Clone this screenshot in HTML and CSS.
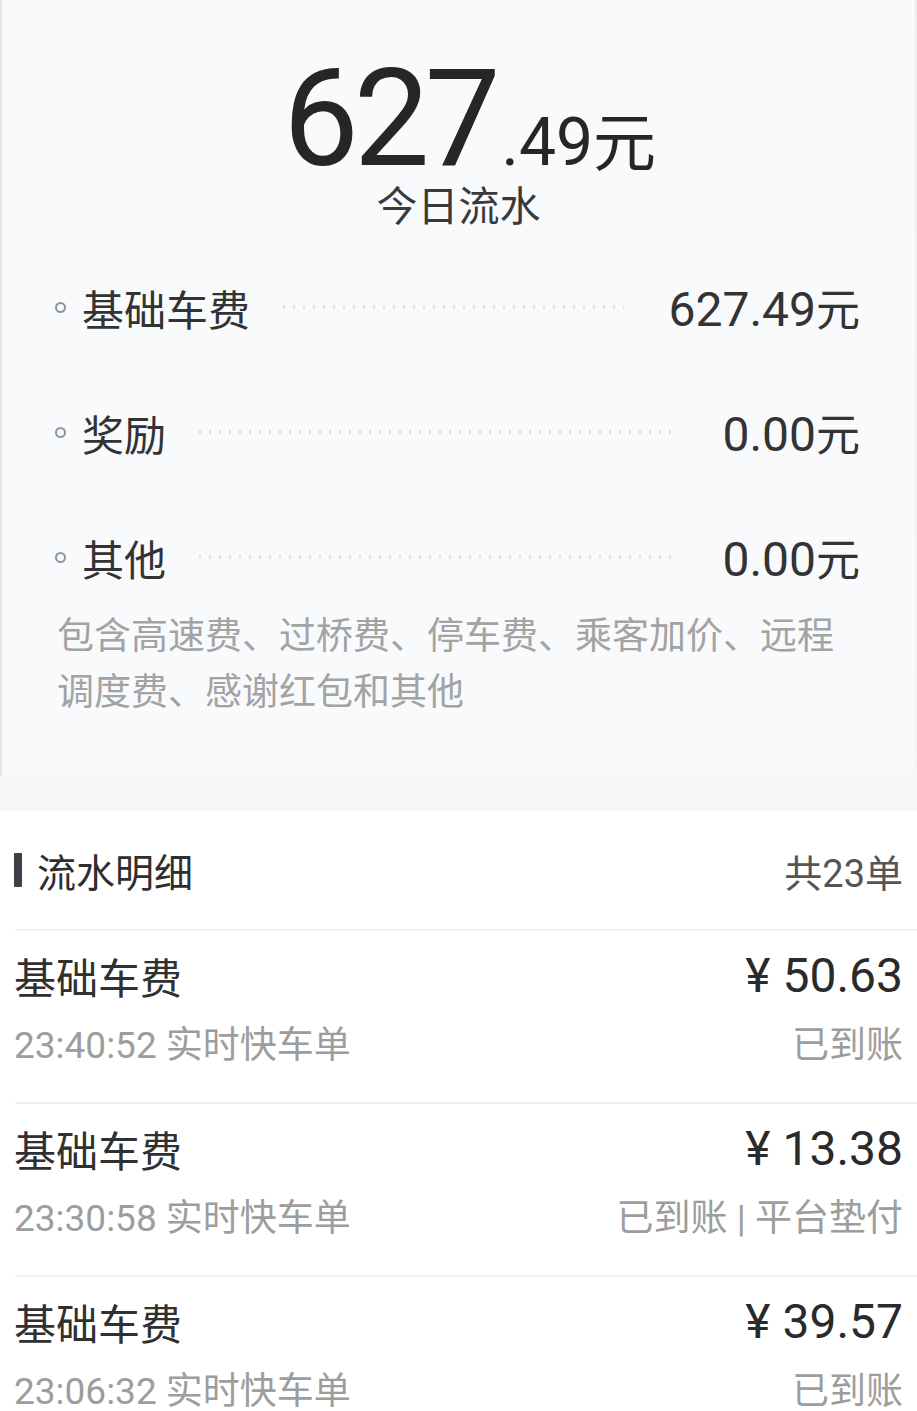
FILE: index.html
```html
<!DOCTYPE html>
<html lang="zh-CN">
<head>
    <meta charset="UTF-8">
    <meta name="viewport" content="width=device-width, initial-scale=1.0">
    <title>今日流水</title>
    <link rel="stylesheet" href="styles.css">
</head>
<body>
    <div class="top">
        <section class="summary">
            <div class="amount">
                <span class="amount-int">627</span>
                <span class="amount-dec">.49</span>
                <span class="amount-unit">元</span>
            </div>
            <div class="amount-label">今日流水</div>

            <ul class="breakdown">
                <li class="breakdown-row">
                    <span class="ring"></span>
                    <span class="breakdown-name">基础车费</span>
                    <span class="dots"></span>
                    <span class="breakdown-value">627.49<span class="unit">元</span></span>
                </li>
                <li class="breakdown-row">
                    <span class="ring"></span>
                    <span class="breakdown-name">奖励</span>
                    <span class="dots"></span>
                    <span class="breakdown-value">0.00<span class="unit">元</span></span>
                </li>
                <li class="breakdown-row">
                    <span class="ring"></span>
                    <span class="breakdown-name">其他</span>
                    <span class="dots"></span>
                    <span class="breakdown-value">0.00<span class="unit">元</span></span>
                </li>
            </ul>

            <p class="note">包含高速费、过桥费、停车费、乘客加价、远程调度费、感谢红包和其他</p>
        </section>
    </div>

    <section class="details">
        <div class="details-head">
            <h2 class="details-title"><span class="bar"></span>流水明细</h2>
            <span class="details-count">共23单</span>
        </div>

        <ul class="orders">
            <li class="order">
                <div class="order-line">
                    <span class="order-type">基础车费</span>
                    <span class="order-price">¥ 50.63</span>
                </div>
                <div class="order-line order-sub">
                    <span>23:40:52 实时快车单</span>
                    <span>已到账</span>
                </div>
            </li>
            <li class="order">
                <div class="order-line">
                    <span class="order-type">基础车费</span>
                    <span class="order-price">¥ 13.38</span>
                </div>
                <div class="order-line order-sub">
                    <span>23:30:58 实时快车单</span>
                    <span>已到账 | 平台垫付</span>
                </div>
            </li>
            <li class="order">
                <div class="order-line">
                    <span class="order-type">基础车费</span>
                    <span class="order-price">¥ 39.57</span>
                </div>
                <div class="order-line order-sub">
                    <span>23:06:32 实时快车单</span>
                    <span>已到账</span>
                </div>
            </li>
        </ul>
    </section>
</body>
</html>
```

FILE: styles.css
```css
body {
    margin: 0;
    background-color: #ffffff;
    font-family: Roboto, "Noto Sans CJK SC", sans-serif;
    color: #2e2e2e;
    overflow: hidden;
}

ul {
    list-style: none;
    margin: 0;
    padding: 0;
}

.top {
    background: linear-gradient(#ececec, #f6f6f6);
    padding-bottom: 35px;
}

.summary {
    background-color: #f9fafc;
    border-left: 2px solid #e4e4e6;
    border-radius: 0 0 12px 0;
    margin-right: 2px;
    padding: 59px 0 59px;
}

.amount {
    display: flex;
    justify-content: center;
    align-items: baseline;
    height: 120px;
    line-height: 120px;
    color: #262626;
    padding-left: 22px;
}

.amount-int {
    font-size: 135px;
    letter-spacing: -5px;
}

.amount-dec {
    font-size: 66px;
    line-height: 1;
    margin-left: 6px;
}

.amount-unit {
    font-family: "Noto Sans CJK SC", sans-serif;
    font-size: 63px;
    line-height: 1;
}

.amount-label {
    text-align: center;
    font-family: "Noto Sans CJK SC", sans-serif;
    font-size: 41px;
    line-height: 48px;
    color: #3a3a3a;
}

.breakdown {
    display: flex;
    flex-direction: column;
    gap: 63px;
    margin-top: 49px;
    padding: 0 55px 0 53px;
}

.breakdown-row {
    display: flex;
    align-items: center;
    height: 62px;
}

.ring {
    width: 7px;
    height: 7px;
    border: 2px solid #8c949e;
    border-radius: 50%;
    margin-right: 16px;
}

.breakdown-name {
    font-family: "Noto Sans CJK SC", sans-serif;
    font-size: 42px;
    color: #333333;
}

.dots {
    flex: 1;
    height: 4px;
    background-image: linear-gradient(to right, #dfe1e5 2px, transparent 2px);
    background-size: 10px 4px;
    margin: 0 44px 0 33px;
}

.breakdown-value {
    font-size: 48px;
    color: #333333;
}

.unit {
    font-family: "Noto Sans CJK SC", sans-serif;
    font-size: 44px;
}

.note {
    margin: 17px 0 0;
    padding: 0 55px;
    font-family: "Noto Sans CJK SC", sans-serif;
    font-size: 37px;
    line-height: 56px;
    color: #a3a3a3;
}

.details-head {
    display: flex;
    justify-content: space-between;
    align-items: center;
    height: 118px;
    padding: 0 14px;
}

.details-title {
    display: flex;
    align-items: center;
    margin: 0;
    font-family: "Noto Sans CJK SC", sans-serif;
    font-size: 39px;
    font-weight: normal;
    color: #2e2e2e;
}

.bar {
    width: 8px;
    height: 34px;
    background-color: #3c4049;
    border-radius: 1px;
    margin-right: 15px;
}

.details-count {
    font-family: Roboto, "Noto Sans CJK SC", sans-serif;
    font-size: 38px;
    color: #555555;
}

.order {
    margin-left: 15px;
    border-top: 2px solid #f0f0f0;
    padding: 19px 14px 38px 0;
}

.order-line {
    display: flex;
    justify-content: space-between;
    align-items: center;
    height: 50px;
    margin-left: -1px;
}

.order-type {
    font-family: "Noto Sans CJK SC", sans-serif;
    font-size: 42px;
    color: #303030;
}

.order-price {
    font-size: 48px;
    color: #2a2a2a;
}

.order-sub {
    margin-top: 20px;
    height: 44px;
    font-size: 37px;
    color: #9d9d9d;
}
```
